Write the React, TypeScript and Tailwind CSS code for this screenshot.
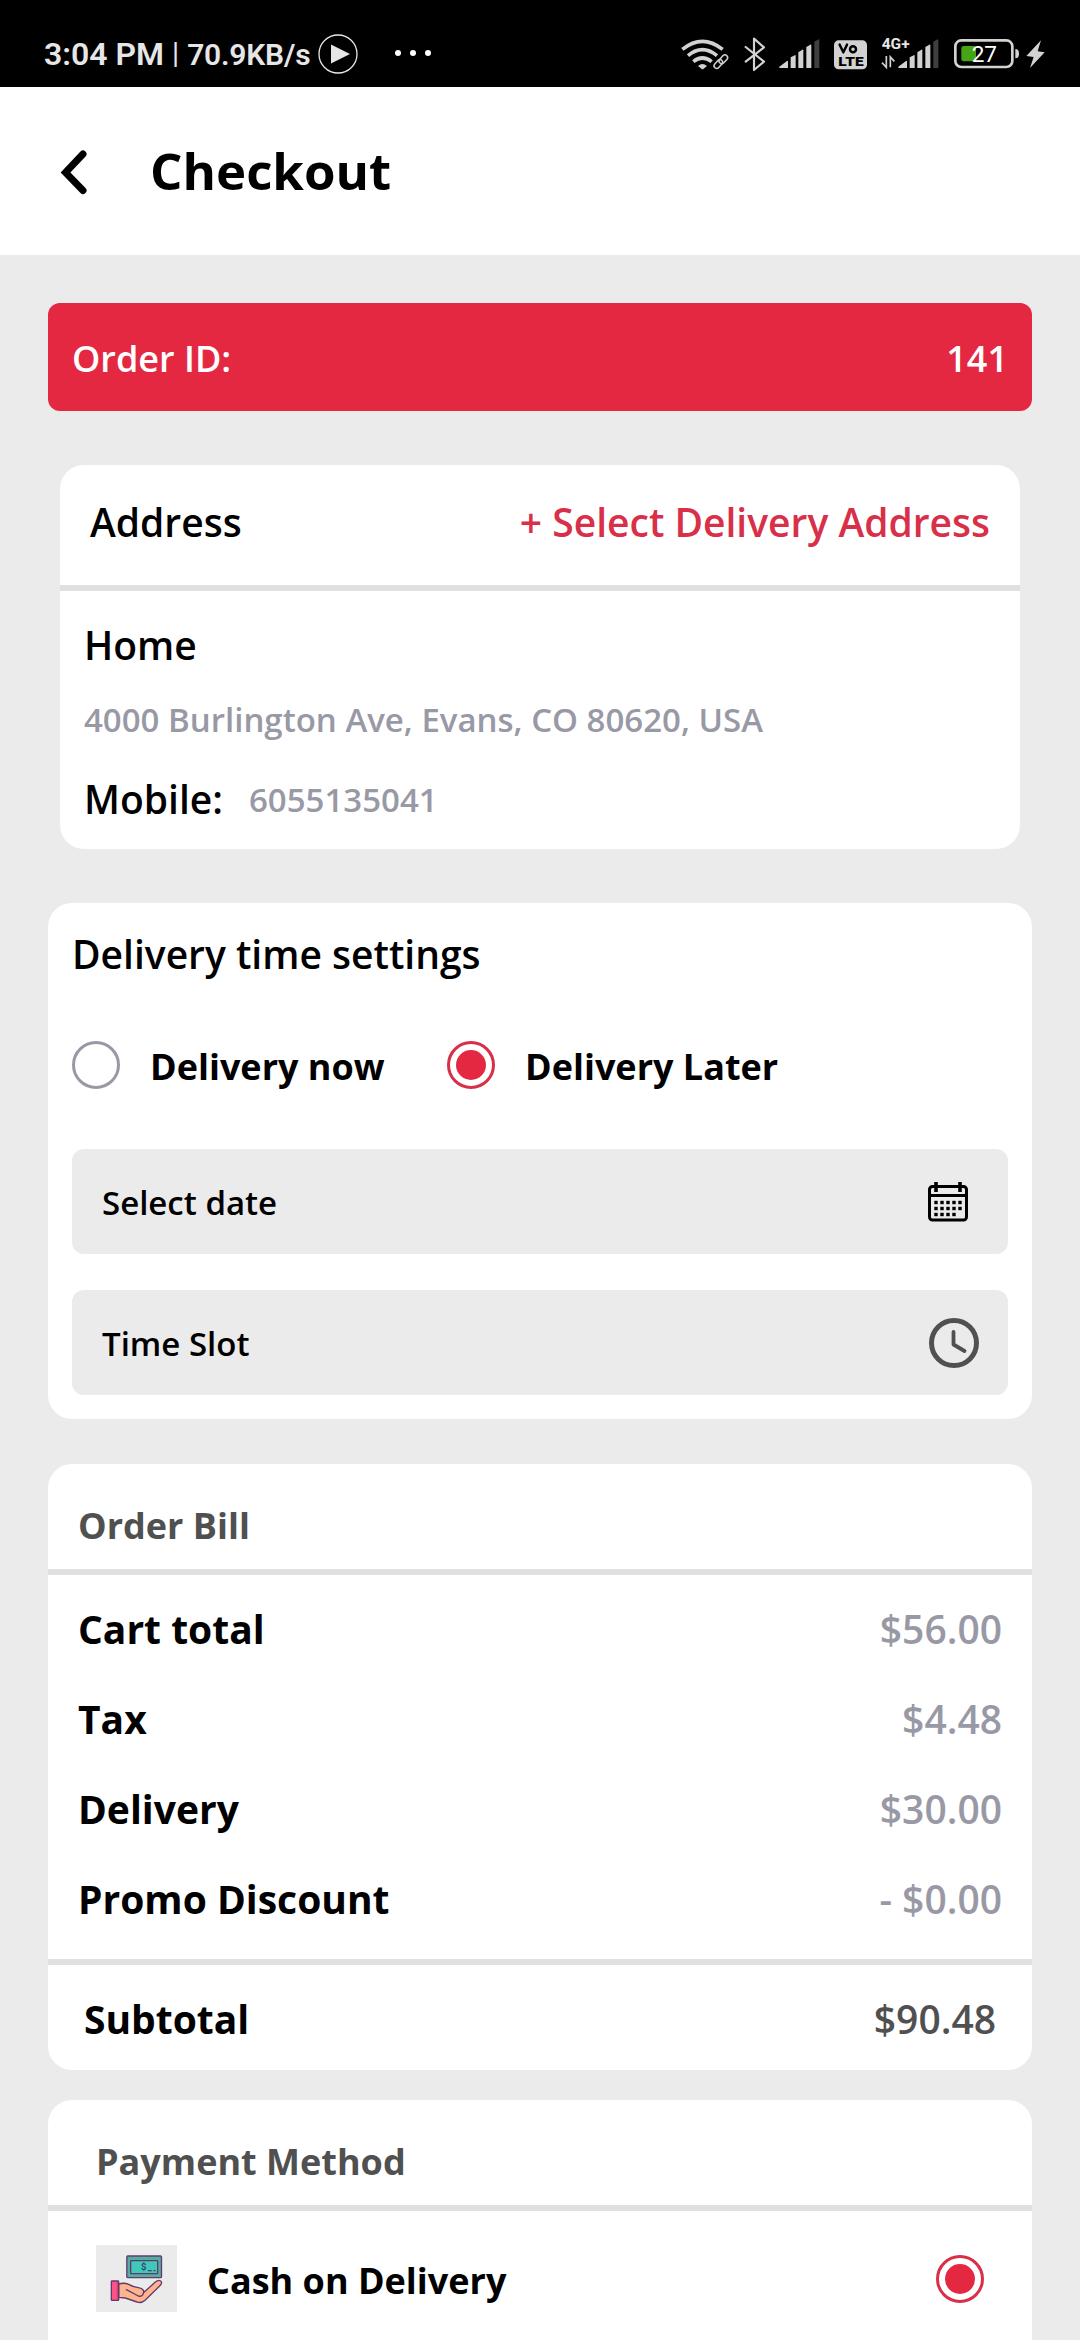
import type { ReactNode } from "react";

const bill = [
  { label: "Cart total", amount: "$56.00" },
  { label: "Tax", amount: "$4.48" },
  { label: "Delivery", amount: "$30.00" },
  { label: "Promo Discount", amount: "- $0.00" },
];

function SignalBars({ x }: { x: number }) {
  return (
    <g transform={`translate(${x} 0)`}>
      <g fill="#d2d2d2">
        <path d="M2 143 Q-2 141 3 138 L24 122 Q27 120 27 124 V143 Z" />
        <path d="M35 111 L49 104 Q50 104 50 106 V143 H35 Z" />
        <path d="M58 96 L70 88 Q73 87 73 90 V143 H58 Z" />
        <path d="M82 80 L94 73 Q97 72 97 74 V143 H82 Z" />
      </g>
      <path d="M106 64 L119 57 Q121 57 121 59 V143 H106 Z" fill="#3f3f3f" />
    </g>
  );
}

function StatusIcons() {
  return (
    <div className="flex">
      <svg className="mr-[15px] h-[35px] w-[48px]" viewBox="67 50 144 105" fill="none" stroke="#d2d2d2" strokeWidth="11">
        <path d="M71 87 Q131 39 192 87" />
        <path d="M88 106 Q131 70 175 106" />
        <path d="M104 124 Q131 102 159 124" />
        <path d="M118 137 Q131 125 145 137 L133 147 H130 Z" fill="#d2d2d2" stroke="none" />
        <g stroke="#000" strokeWidth="13">
          <rect x="-13" y="-8" width="26" height="16" rx="8" transform="translate(194 117) rotate(-48)" />
          <rect x="-13" y="-8" width="26" height="16" rx="8" transform="translate(180 132) rotate(-48)" />
        </g>
        <g strokeWidth="4.5">
          <rect x="-15" y="-8" width="30" height="16" rx="8" transform="translate(194 117) rotate(-48)" />
          <rect x="-15" y="-8" width="30" height="16" rx="8" transform="translate(179 131) rotate(-48)" />
        </g>
      </svg>
      <svg className="mr-[13px] h-[35px] w-[22px]" viewBox="257 50 66 105" fill="none" stroke="#d2d2d2" strokeWidth="6.5" strokeLinejoin="round" strokeLinecap="round">
        <path d="M262 80 L317 124 L287 149 V55 L317 81 L262 124" />
      </svg>
      <svg className="mr-[14px] h-[35px] w-[41px]" viewBox="362 50 123 105">
        <SignalBars x={362} />
      </svg>
      <svg className="mr-[14px] h-[35px] w-[33px]" viewBox="525 50 99 105">
        <rect x="525" y="60" width="99" height="87" rx="14" fill="#d2d2d2" />
        <g fill="none" stroke="#000" strokeWidth="7.5" strokeLinecap="round" strokeLinejoin="round">
          <path d="M542 73 L553 96 L564 73" />
          <ellipse cx="582" cy="87" rx="9" ry="9" />
        </g>
        <text x="538" y="137" fontFamily="Roboto" fontWeight="900" fontSize="40" textLength="76" lengthAdjust="spacingAndGlyphs">LTE</text>
      </svg>
      <svg className="mr-[15px] h-[35px] w-[58px] overflow-visible" viewBox="665 50 174 105">
        <text x="667" y="87" fill="#e6e6e6" fontFamily="Roboto" fontWeight="700" fontSize="44" textLength="84" lengthAdjust="spacingAndGlyphs">4G+</text>
        <path d="M681 107 V141 L668 127 M693 141 V110 L705 123" fill="none" stroke="#d2d2d2" strokeWidth="5" />
        <SignalBars x={716} />
      </svg>
      <svg className="mr-[7px] h-[35px] w-[65px]" viewBox="883 50 195 105">
        <rect x="887" y="60" width="171" height="80" rx="18" fill="none" stroke="#d2d2d2" strokeWidth="8" />
        <rect x="905" y="77" width="44" height="46" rx="7" fill="#46a516" />
        <path d="M1067 86 Q1078 86 1078 100 Q1078 114 1067 114 Z" fill="#d2d2d2" />
        <text x="936" y="125" fill="#fff" fontFamily="Roboto" fontWeight="400" fontSize="64" textLength="76" lengthAdjust="spacingAndGlyphs">27</text>
      </svg>
      <svg className="h-[35px] w-[19px]" viewBox="1100 50 57 105" fill="#d2d2d2">
        <path d="M1145 60 L1101 107 L1123 110 L1112 143 L1156 96 L1135 93 Z" />
      </svg>
    </div>
  );
}

function Radio({ checked = false }: { checked?: boolean }) {
  return checked ? (
    <span className="flex size-12 shrink-0 items-center justify-center rounded-full border-[3px] border-[#d92f49]">
      <span className="size-[30px] rounded-full bg-[#e52842]" />
    </span>
  ) : (
    <span className="size-12 shrink-0 rounded-full border-[3px] border-[#9999a6]" />
  );
}

function Field({ label, children }: { label: string; children: ReactNode }) {
  return (
    <div className="flex h-[105px] items-center justify-between rounded-xl bg-[#ebebeb] pl-[30px]">
      <span className="pt-[2px] text-[33px] leading-[45px] font-semibold">{label}</span>
      {children}
    </div>
  );
}

function CalendarIcon() {
  return (
    <svg className="mr-10 h-[42px] w-[40px]" viewBox="0 0 40 42">
      <rect x="1.5" y="5.5" width="37" height="33.5" rx="3" fill="none" stroke="#000" strokeWidth="3" />
      <path d="M1.5 14.5 H38.5" stroke="#000" strokeWidth="3" />
      <path d="M8 1 V11 M32 1 V11" stroke="#000" strokeWidth="3.6" />
      {[21.5, 27.5, 33.5].map((y, row) =>
        [8, 14, 20, 26, 32].slice(0, row === 2 ? 4 : 5).map((x) => (
          <rect key={`${x}-${y}`} x={x - 1.7} y={y - 1.7} width="3.4" height="3.4" />
        )),
      )}
    </svg>
  );
}

function ClockIcon() {
  return (
    <svg className="mr-[29px] size-[50px]" viewBox="0 0 50 50" fill="none" stroke="#505050">
      <circle cx="25" cy="25" r="22.5" strokeWidth="5" />
      <path d="M24.5 14 V26.5 L35.5 33" strokeWidth="3.8" strokeLinecap="round" strokeLinejoin="round" />
    </svg>
  );
}

function CashIcon() {
  return (
    <svg className="h-[67px] w-[81px] bg-[#ebebeb]" viewBox="108 465 243 201" stroke="#633a70" strokeLinejoin="round" strokeLinecap="round">
      <rect x="200.500" y="498" width="104" height="65" rx="3" fill="#55ad9f" strokeWidth="4" />
      <rect x="212" y="512" width="81" height="39" rx="2" fill="#40c9b8" strokeWidth="4" />
      <path d="M265 542 H274 M282 542 H285" strokeWidth="4" />
      <text x="243" y="541" fontFamily="Roboto" fontWeight="700" fontSize="28" fill="#34447a" stroke="none">$</text>
      <path d="M176 582 Q192 577 206 583 Q221 591 235 593 Q251 596 252 607 L286 576 Q298 567 304 575 Q306 580 301 586 L256 630 Q244 641 231 636 L196 624 L176 622 Z" fill="#ffb48e" strokeWidth="4" />
      <path d="M199 599 L235 618 Q248 622 251 607" fill="none" strokeWidth="4" />
      <rect x="154" y="573" width="22" height="58" rx="2" fill="#ff5288" strokeWidth="4" />
      <path d="M172 576 V628" stroke="#c23b72" strokeWidth="3" />
    </svg>
  );
}

export default function App() {
  return (
    <div className="flex h-[2340px] w-[1080px] flex-col overflow-hidden bg-[#ebebeb] font-['Open_Sans',sans-serif] text-black">
      <div className="flex h-[87px] shrink-0 items-start justify-between bg-black pr-[35px] pl-[44px] font-[Roboto,sans-serif] text-[#e6e6e6]">
        <div className="flex pt-[34px]">
          <div className="flex h-[40px] w-[266px] items-center whitespace-pre">
            <span className="text-[32px] font-semibold">3:04 PM</span>
            <span className="px-[8px] text-[29px]">|</span>
            <span className="text-[30px] font-semibold tracking-[-0.2px]">70.9KB/s</span>
          </div>
          <svg className="ml-[8px] size-[40px]" viewBox="0 0 40 40">
            <circle cx="20" cy="20" r="19" fill="none" stroke="#e6e6e6" strokeWidth="1.3" />
            <path d="M13 10.500 L32 20 L13 29.500 Z" fill="#e6e6e6" />
          </svg>
          <div className="ml-[37px] flex h-[38px] items-center gap-[9px]">
            <i className="size-1.5 rounded-full bg-white" />
            <i className="size-1.5 rounded-full bg-white" />
            <i className="size-1.5 rounded-full bg-white" />
          </div>
        </div>
        <div className="pt-[37px]">
          <StatusIcons />
        </div>
      </div>

      <header className="flex h-[168px] shrink-0 items-center bg-white pl-[60px]">
        <svg className="mt-[2px] h-[46px] w-[30px]" viewBox="0 0 30 46" fill="none" stroke="#000" strokeWidth="7" strokeLinecap="round" strokeLinejoin="miter">
          <path d="M23 5 L5.500 23.500 L23 41.500" />
        </svg>
        <h1 className="ml-[60px] pb-[3px] text-[51px] leading-[68px] font-bold">Checkout</h1>
      </header>

      <main className="flex flex-col px-12 pt-12">
        <section className="flex h-[108px] items-center justify-between rounded-xl bg-[#e52842] px-6 pt-[3px] text-[36px] leading-[50px] font-semibold text-white">
          <span>Order ID:</span>
          <span>141</span>
        </section>

        <section className="mx-3 mt-[54px] h-[384px] rounded-3xl bg-white text-[39px] leading-[54px] font-semibold">
          <div className="flex h-[126px] items-start justify-between border-b-[6px] border-[#e0e0e0] px-[30px] pt-[30px]">
            <span>Address</span>
            <button className="text-[#d92f49]">+ Select Delivery Address</button>
          </div>
          <div className="px-6 pt-[27px]">
            <h2>Home</h2>
            <p className="mt-[25px] text-[33px] leading-[45px] text-[#9999a6]">4000 Burlington Ave, Evans, CO 80620, USA</p>
            <div className="mt-[29px] flex items-center">
              <span className="w-[165px]">Mobile:</span>
              <span className="pt-[2px] text-[33px] text-[#9999a6]">6055135041</span>
            </div>
          </div>
        </section>

        <section className="mt-[54px] h-[516px] rounded-3xl bg-white px-6 pt-6">
          <h2 className="text-[39px] leading-[54px] font-semibold">Delivery time settings</h2>
          <div className="mt-[60px] flex h-12 items-center text-[36px] leading-[50px] font-bold">
            <Radio />
            <span className="ml-[30px] w-[297px] pt-[3px]">Delivery now</span>
            <Radio checked />
            <span className="ml-[30px] pt-[3px]">Delivery Later</span>
          </div>
          <div className="mt-[60px] flex flex-col gap-9">
            <Field label="Select date">
              <CalendarIcon />
            </Field>
            <Field label="Time Slot">
              <ClockIcon />
            </Field>
          </div>
        </section>

        <section className="mt-[45px] h-[606px] rounded-3xl bg-white">
          <h2 className="h-[111px] border-b-[6px] border-[#e0e0e0] px-[30px] pt-[37px] text-[36px] leading-[50px] font-bold text-[#505050]">Order Bill</h2>
          <div className="flex h-[390px] flex-col gap-9 border-b-[6px] border-[#e0e0e0] px-[30px] pt-[27px] text-[39px] leading-[54px]">
            {bill.map((row) => (
              <div key={row.label} className="flex justify-between">
                <span className="font-bold">{row.label}</span>
                <span className="font-semibold text-[#9999a6]">{row.amount}</span>
              </div>
            ))}
          </div>
          <div className="flex justify-between px-9 pt-[27px] text-[39px] leading-[54px]">
            <span className="font-bold">Subtotal</span>
            <span className="font-semibold text-[#505050]">$90.48</span>
          </div>
        </section>

        <section className="mt-[30px] h-[300px] rounded-t-3xl bg-white">
          <h2 className="h-[111px] border-b-[6px] border-[#e0e0e0] px-12 pt-[37px] text-[36px] leading-[50px] font-bold text-[#505050]">Payment Method</h2>
          <div className="flex h-[135px] items-center px-12">
            <CashIcon />
            <span className="ml-[30px] flex-1 pt-[5px] text-[36px] leading-[50px] font-bold">Cash on Delivery</span>
            <Radio checked />
          </div>
        </section>
      </main>
    </div>
  );
}
